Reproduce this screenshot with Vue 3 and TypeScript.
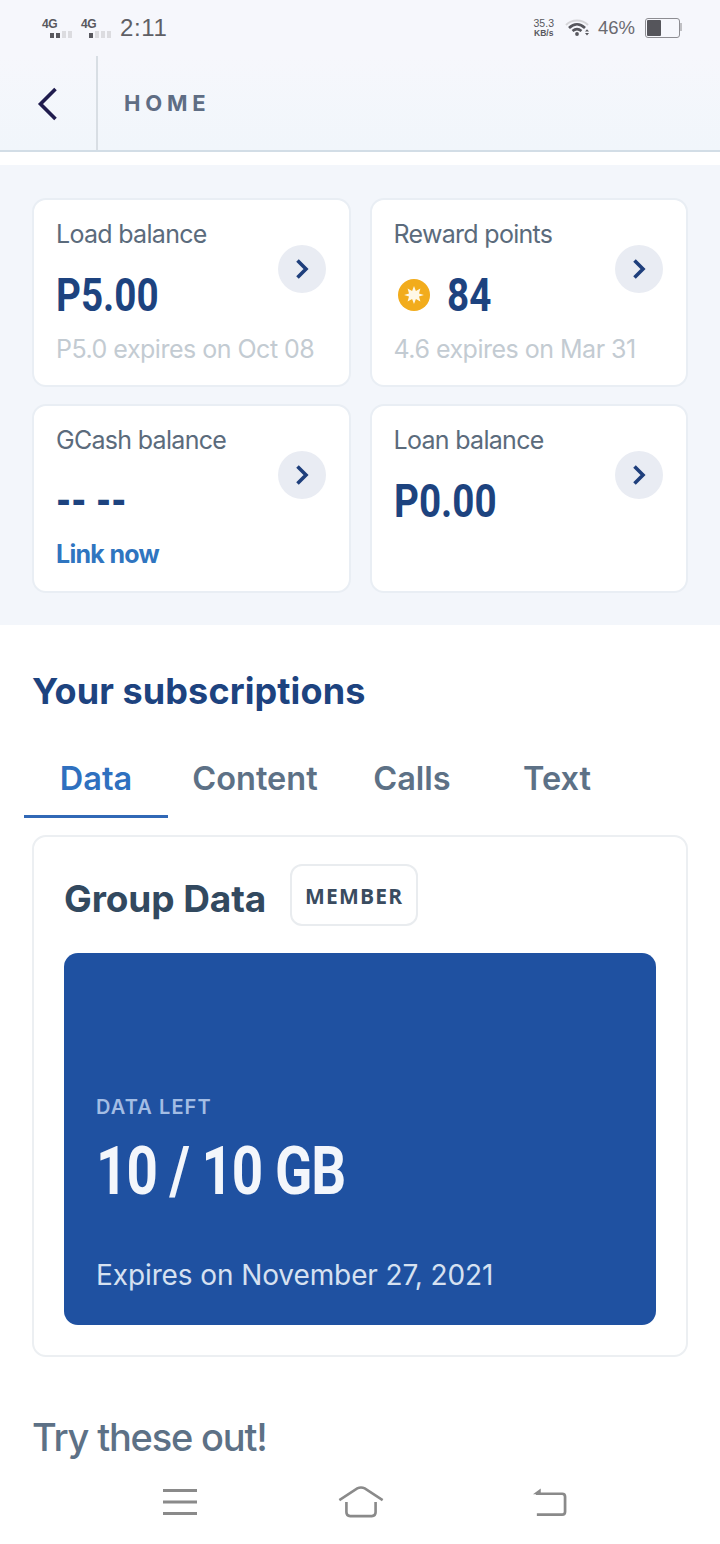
<template>
  <div class="screen">
    <!--status bar-->
    <div class="status">
      <div class="status-left">
        <div class="signal" v-for="(s, i) in signals" :key="i">
          <span class="net">4G</span>
          <span class="bars">
            <i v-for="n in 4" :key="n" :class="{ on: n <= s }"></i>
          </span>
        </div>
        <span class="clock">2:11</span>
      </div>
      <div class="status-right">
        <div class="speed"><span>35.3</span><span class="unit">KB/s</span></div>
        <svg class="wifi" width="26" height="18" viewBox="0 0 26 18">
          <path d="M1 6 C7 0 17 0 23 6" fill="none" stroke="#d5d5d8" stroke-width="2" />
          <path d="M4 9 C9 4 15 4 20 9" fill="none" stroke="#56565c" stroke-width="2.6" />
          <path d="M7.5 12 C10.5 9.5 13.5 9.5 16.5 12" fill="none" stroke="#56565c" stroke-width="2.6" />
          <circle cx="12" cy="15" r="1.9" fill="#56565c" />
          <path d="M20 12.5 l2 -2.2 l2 2.2 z M20 14 h4 l-2 2.5 z" fill="#56565c" />
        </svg>
        <span class="pct">46%</span>
        <div class="battery"><div class="level" :style="{ width: batteryLevel + '%' }"></div></div>
      </div>
    </div>

    <!--header-->
    <header class="top">
      <div class="back">
        <svg width="22" height="34" viewBox="0 0 22 34">
          <path d="M18.5 2 L3.5 17 L18.5 32" fill="none" stroke="#201c4e" stroke-width="3.6" />
        </svg>
      </div>
      <div class="top-title">HOME</div>
    </header>

    <main class="page">
      <section class="balances">
        <div class="card" v-for="c in cards" :key="c.label">
          <div class="card-label">{{ c.label }}</div>
          <div class="card-value" :class="{ 'has-star': c.star }">
            <svg v-if="c.star" class="star" width="34" height="34" viewBox="0 0 34 34">
              <circle cx="17" cy="17" r="16" fill="#f2ac1c" />
              <path d="M17 8 l1.900 5 l4.500-2.400 l-1.400 4.800 l4.900 1.600 l-4.900 1.600 l1.400 4.800 l-4.500-2.400 l-1.900 5 l-1.900-5 l-4.500 2.400 l1.400-4.800 l-4.900-1.600 l4.900-1.600 l-1.400-4.800 l4.500 2.400 z" fill="#fff8e6" />
            </svg>
            <span>{{ c.value }}</span>
          </div>
          <div v-if="c.note" class="card-note" :class="{ link: c.link }">{{ c.note }}</div>
          <div class="go">
            <svg width="14" height="20" viewBox="0 0 14 20">
              <path d="M2.500 1.500 L11 10 L2.500 18.500" fill="none" stroke="#1f3f7c" stroke-width="3.6" />
            </svg>
          </div>
        </div>
      </section>

      <section class="subs">
        <h2>Your subscriptions</h2>
        <div class="tabs">
          <div v-for="t in tabs" :key="t.name" class="tab" :class="{ active: t.name === activeTab }" :style="{ width: t.width + 'px' }">{{ t.name }}</div>
        </div>
        <div class="sub-card">
          <div class="sub-head">
            <span class="sub-title">Group Data</span>
            <span class="chip">MEMBER</span>
          </div>
          <div class="data-box">
            <div class="data-label">DATA LEFT</div>
            <div class="data-value">10 / 10 GB</div>
            <div class="data-exp">Expires on November 27, 2021</div>
          </div>
        </div>
        <h3>Try these out!</h3>
      </section>
    </main>

    <!--system nav-->
    <nav class="sysnav">
      <svg width="34" height="28" viewBox="0 0 34 28">
        <path d="M0 2.500 H34 M0 14 H34 M0 25.500 H34" stroke="#8a8a8a" stroke-width="3" fill="none" />
      </svg>
      <svg width="48" height="32" viewBox="0 0 50 34">
        <path d="M2 15 L21 2.500 Q25 0.500 29 2.500 L48 15" stroke="#8a8a8a" stroke-width="2.600" fill="none" />
        <path d="M9.500 17 V28 Q9.500 32 13.500 32 H36.500 Q40.500 32 40.500 28 V17" stroke="#8a8a8a" stroke-width="2.800" fill="none" />
      </svg>
      <svg width="35" height="30" viewBox="0 0 36 30">
        <path d="M1 7 L9 1 V7 Z" fill="#8a8a8a" />
        <path d="M4 6.500 H31 Q34 6.500 34 9.500 V25 Q34 28 31 28 H5" stroke="#8a8a8a" stroke-width="2.800" fill="none" />
      </svg>
    </nav>
  </div>
</template>

<script setup lang="ts">
type BalanceCard = {
  label: string,
  value: string,
  note?: string,
  star?: boolean,
  link?: boolean
}

const signals = [2, 1];
const batteryLevel = 46;
const activeTab = "Data";

const cards: BalanceCard[] = [
  { label: "Load balance", value: "P5.00", note: "P5.0 expires on Oct 08" },
  { label: "Reward points", value: "84", note: "4.6 expires on Mar 31", star: true },
  { label: "GCash balance", value: "-- --", note: "Link now", link: true },
  { label: "Loan balance", value: "P0.00" }
];

const tabs = [
  { name: "Data", width: 144 },
  { name: "Content", width: 174 },
  { name: "Calls", width: 140 },
  { name: "Text", width: 150 }
];
</script>

<style>
html, body {
  margin: 0;
  background: #fff;
}
</style>

<style scoped>
.screen {
  width: 720px;
  height: 1544px;
  display: flex;
  flex-direction: column;
  overflow: hidden;
  font-family: Inter, "Liberation Sans", sans-serif;
  background: #fff;
}

.status {
  height: 56px;
  box-sizing: border-box;
  padding: 0 40px 0 42px;
  display: flex;
  justify-content: space-between;
  align-items: center;
  background: #f6f7fc;
  color: #58585e;
}
.status-left, .status-right {
  display: flex;
  align-items: center;
}
.signal {
  width: 39px;
  display: flex;
  flex-direction: column;
  font-family: "Liberation Sans", sans-serif;
}
.net {
  font-size: 12px;
  font-weight: 700;
  line-height: 12px;
  letter-spacing: -0.5px;
}
.bars {
  display: flex;
  gap: 2px;
  align-items: flex-end;
  margin: 1px 0 0 8px;
}
.bars i {
  width: 4px;
  height: 7px;
  background: #dcdce0;
}
.bars i.on {
  background: #58585e;
  height: 5px;
}
.clock {
  font-family: "Liberation Sans", sans-serif;
  font-size: 24px;
  letter-spacing: 0.6px;
  color: #5f5f65;
}
.speed {
  display: flex;
  flex-direction: column;
  align-items: center;
  font-family: "Liberation Sans", sans-serif;
  font-size: 10.500px;
  line-height: 10px;
  margin-right: 11px;
}
.speed .unit {
  font-size: 8.500px;
  font-weight: 700;
}
.wifi {
  margin-right: 7px;
}
.pct {
  font-family: "Liberation Sans", sans-serif;
  font-size: 18.500px;
  color: #6a6a70;
  margin-right: 10px;
}
.battery {
  width: 31px;
  height: 16px;
  border: 1px solid #8d8d92;
  border-radius: 3px;
  padding: 1px;
  position: relative;
}
.battery::after {
  content: "";
  position: absolute;
  right: -3px;
  top: 4px;
  width: 2px;
  height: 8px;
  background: #c0c0c4;
}
.level {
  height: 100%;
  background: #55555b;
  border-radius: 1px;
}

.top {
  height: 96px;
  box-sizing: border-box;
  display: flex;
  align-items: stretch;
  background: linear-gradient(#f6f7fc, #f1f6fb);
  border-bottom: 2px solid #d2dde6;
}
.back {
  width: 98px;
  box-sizing: border-box;
  padding: 0 0 0 37px;
  display: flex;
  align-items: center;
  border-right: 2px solid #d8dee4;
}
.back svg {
  margin-top: 2px;
}
.top-title {
  margin-left: 26px;
  align-self: center;
  font-size: 22px;
  font-weight: 700;
  letter-spacing: 4.800px;
  color: #5f6d84;
}

.page {
  flex: 1;
  min-height: 0;
  padding-top: 13px;
}
.balances {
  background: #f3f6fb;
  padding: 33px 32px 32px;
  display: grid;
  grid-template-columns: 1fr 1fr;
  gap: 17px 19px;
}
.card {
  position: relative;
  height: 189px;
  box-sizing: border-box;
  padding: 19px 22px;
  background: #fff;
  border: 2px solid #e9eef4;
  border-radius: 14px;
}
.card-label {
  font-size: 25px;
  line-height: 30px;
  letter-spacing: -0.7px;
  color: #5b6b7c;
}
.card-value {
  margin-top: 19px;
  height: 54px;
  display: flex;
  align-items: center;
  font-family: Roboto, sans-serif;
  font-size: 46px;
  font-weight: 700;
  color: #1d437f;
}
.card-value span {
  display: inline-block;
  transform: scaleX(0.84);
  transform-origin: left center;
}
.star {
  margin-left: 3px;
}
.has-star span {
  margin-left: 16px;
}
.card-note {
  margin-top: 12px;
  font-size: 25px;
  line-height: 30px;
  letter-spacing: -0.5px;
  color: #c3cbd2;
}
.card-note.link {
  margin-top: 11px;
  font-weight: 700;
  letter-spacing: -0.7px;
  color: #2f75c0;
}
.go {
  position: absolute;
  right: 23px;
  top: 45px;
  width: 48px;
  height: 48px;
  border-radius: 50%;
  background: #e9ecf3;
  display: flex;
  align-items: center;
  justify-content: center;
}

.subs {
  padding: 0 32px;
}
h2 {
  margin: 44px 0 0;
  font-size: 36px;
  line-height: 44px;
  font-weight: 700;
  letter-spacing: 0.1px;
  color: #1d437f;
}
.tabs {
  display: flex;
  margin: 21px 0 0 -8px;
}
.tab {
  height: 84px;
  box-sizing: border-box;
  padding-top: 25px;
  text-align: center;
  font-size: 32.500px;
  line-height: 40px;
  font-weight: 600;
  color: #5d7186;
}
.tab.active {
  color: #2f70bf;
  border-bottom: 3px solid #3168b6;
}
.sub-card {
  margin-top: 17px;
  height: 522px;
  box-sizing: border-box;
  padding: 27px 30px 0;
  border: 2px solid #eceff2;
  border-radius: 14px;
}
.sub-head {
  display: flex;
  align-items: center;
  height: 62px;
}
.sub-title {
  margin-top: 6px;
  font-size: 37px;
  font-weight: 700;
  letter-spacing: -0.1px;
  color: #32495f;
}
.chip {
  margin-left: 24px;
  width: 128px;
  height: 62px;
  box-sizing: border-box;
  padding-top: 2px;
  border: 2px solid #e9ecef;
  border-radius: 12px;
  display: flex;
  align-items: center;
  justify-content: center;
  font-family: "Open Sans", sans-serif;
  font-size: 21px;
  font-weight: 700;
  letter-spacing: 1.200px;
  color: #3a4c60;
}
.data-box {
  margin-top: 27px;
  height: 372px;
  box-sizing: border-box;
  padding: 0 32px;
  border-radius: 14px;
  background: #1f51a1;
  display: flex;
  flex-direction: column;
  justify-content: flex-end;
}
.data-label {
  font-size: 20px;
  font-weight: 600;
  letter-spacing: 1.100px;
  line-height: 26px;
  color: #a3bde4;
}
.data-value {
  margin-top: 14px;
  font-family: Roboto, sans-serif;
  font-size: 66px;
  line-height: 76px;
  font-weight: 700;
  letter-spacing: -1.200px;
  color: #f3f6fb;
  transform: scaleX(0.83);
  transform-origin: left center;
}
.data-exp {
  margin: 47px 0 32px;
  font-size: 28px;
  line-height: 36px;
  letter-spacing: -0.1px;
  color: #d6e1f1;
}
h3 {
  margin: 56px 0 0;
  font-size: 38px;
  line-height: 48px;
  font-weight: 500;
  letter-spacing: -1.200px;
  color: #5d7186;
}

.sysnav {
  flex: none;
  height: 84px;
  box-sizing: border-box;
  display: flex;
  align-items: center;
  gap: 140px;
  background: #fff;
  padding-left: 163px;
}
.sysnav svg:last-child {
  margin-left: 7px;
}
</style>
